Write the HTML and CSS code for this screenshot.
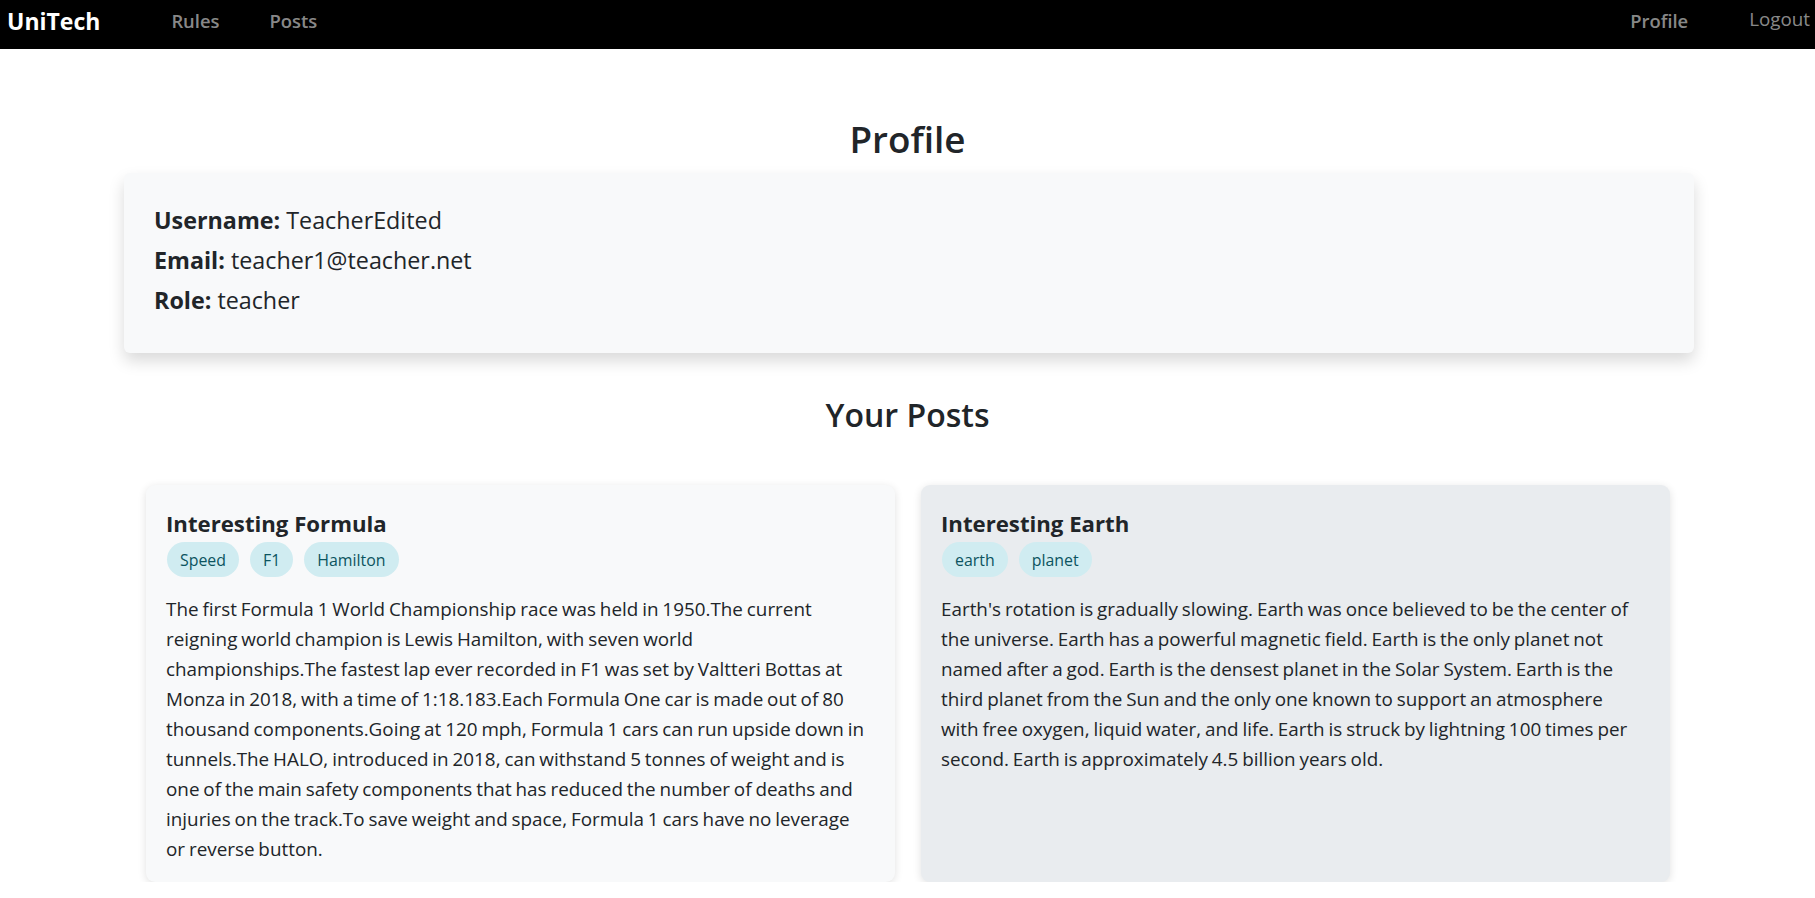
FILE: index.html
```html
<!DOCTYPE html>
<html lang="en">
<head>
<meta charset="utf-8">
<title>UniTech - Profile</title>
<link rel="stylesheet" href="styles.css">
</head>
<body>
<nav class="navbar">
  <div class="nav-left">
    <a class="brand" href="#">UniTech</a>
    <a class="nav-link" href="#">Rules</a>
    <a class="nav-link" href="#">Posts</a>
  </div>
  <div class="nav-right">
    <a class="nav-link" href="#">Profile</a>
    <button class="logout" type="button">Logout</button>
  </div>
</nav>

<main class="page">
  <h1 class="page-title">Profile</h1>
  <section class="profile-card">
    <p class="profile-line"><strong>Username:</strong> TeacherEdited</p>
    <p class="profile-line"><strong>Email:</strong> teacher1@teacher.net</p>
    <p class="profile-line"><strong>Role:</strong> teacher</p>
  </section>

  <h2 class="section-title">Your Posts</h2>
  <div class="posts">
    <article class="post-card">
      <h3 class="post-title">Interesting Formula</h3>
      <div class="tags">
        <span class="tag">Speed</span>
        <span class="tag">F1</span>
        <span class="tag">Hamilton</span>
      </div>
      <p class="post-text">The first Formula 1 World Championship race was held in 1950.The current reigning world champion is Lewis Hamilton, with seven world championships.The fastest lap ever recorded in F1 was set by Valtteri Bottas at Monza in 2018, with a time of 1:18.183.Each Formula One car is made out of 80 thousand components.Going at 120 mph, Formula 1 cars can run upside down in tunnels.The HALO, introduced in 2018, can withstand 5 tonnes of weight and is one of the main safety components that has reduced the number of deaths and injuries on the track.To save weight and space, Formula 1 cars have no leverage or reverse button.</p>
    </article>
    <article class="post-card post-card--active">
      <h3 class="post-title">Interesting Earth</h3>
      <div class="tags">
        <span class="tag">earth</span>
        <span class="tag">planet</span>
      </div>
      <p class="post-text">Earth's rotation is gradually slowing. Earth was once believed to be the center of the universe. Earth has a powerful magnetic field. Earth is the only planet not named after a god. Earth is the densest planet in the Solar System. Earth is the third planet from the Sun and the only one known to support an atmosphere with free oxygen, liquid water, and life. Earth is struck by lightning 100 times per second. Earth is approximately 4.5 billion years old.</p>
    </article>
  </div>
</main>
</body>
</html>
```
FILE: styles.css
```css
* { box-sizing: border-box; }

body {
  margin: 0;
  background: #ffffff;
  color: #212529;
  font-family: "Open Sans", "Noto Sans", sans-serif;
}

/* Navbar */
.navbar {
  height: 49px;
  background: #000000;
  display: flex;
  justify-content: space-between;
  align-items: flex-start;
  padding: 6px 5px 0 7px;
}
.nav-left, .nav-right {
  display: flex;
  align-items: flex-start;
}
.brand {
  color: #ffffff;
  font-weight: 700;
  font-size: 23px;
  line-height: 30px;
  text-decoration: none;
  margin-right: 71px;
}
.nav-link {
  color: rgba(255, 255, 255, 0.55);
  font-weight: 600;
  font-size: 18.4px;
  line-height: 30px;
  text-decoration: none;
}
.nav-left .nav-link + .nav-link { margin-left: 50px; }
.logout {
  background: none;
  border: 0;
  padding: 0;
  margin: -2px 0 0 61px;
  color: rgba(255, 255, 255, 0.55);
  font-family: inherit;
  font-size: 18.8px;
  font-weight: 400;
  line-height: 30px;
  cursor: pointer;
}

/* Page */
.page {
  margin: 0 121px;
}
.page-title {
  margin: 67px 0 11px;
  text-align: center;
  font-size: 36.8px;
  font-weight: 600;
  line-height: 46px;
}
.profile-card {
  margin-left: 3px;
  background: #f8f9fa;
  border-radius: 6px;
  box-shadow: 0 8px 16px rgba(0, 0, 0, 0.15);
  padding: 27px 30px 33px;
}
.profile-line {
  margin: 0;
  font-size: 23.3px;
  line-height: 40px;
}
.profile-line strong { font-weight: 700; }

.section-title {
  margin: 42px 0 50px;
  text-align: center;
  font-size: 32px;
  font-weight: 600;
  line-height: 40px;
}

/* Posts */
.posts {
  display: grid;
  grid-template-columns: 1fr 1fr;
  gap: 26px;
  padding: 0 24px 0 25px;
}
.post-card {
  background: #f8f9fa;
  border-radius: 9px;
  box-shadow: 0 2px 8px rgba(0, 0, 0, 0.12);
  padding: 24px 29px 18px 20px;
}
.post-card--active {
  background: #e9ecef;
}
.post-title {
  margin: 0 0 4px;
  font-size: 22.2px;
  font-weight: 700;
  line-height: 29px;
}
.tags {
  display: flex;
  gap: 11px;
  margin: 0 0 17px 1px;
}
.tag {
  display: inline-block;
  background: #d0ecf1;
  color: #0c5460;
  font-size: 15.9px;
  line-height: 24px;
  padding: 5.5px 13px;
  border-radius: 18px;
}
.post-text {
  margin: 0;
  font-size: 18.85px;
  line-height: 30px;
  word-spacing: -1px;
}
```
